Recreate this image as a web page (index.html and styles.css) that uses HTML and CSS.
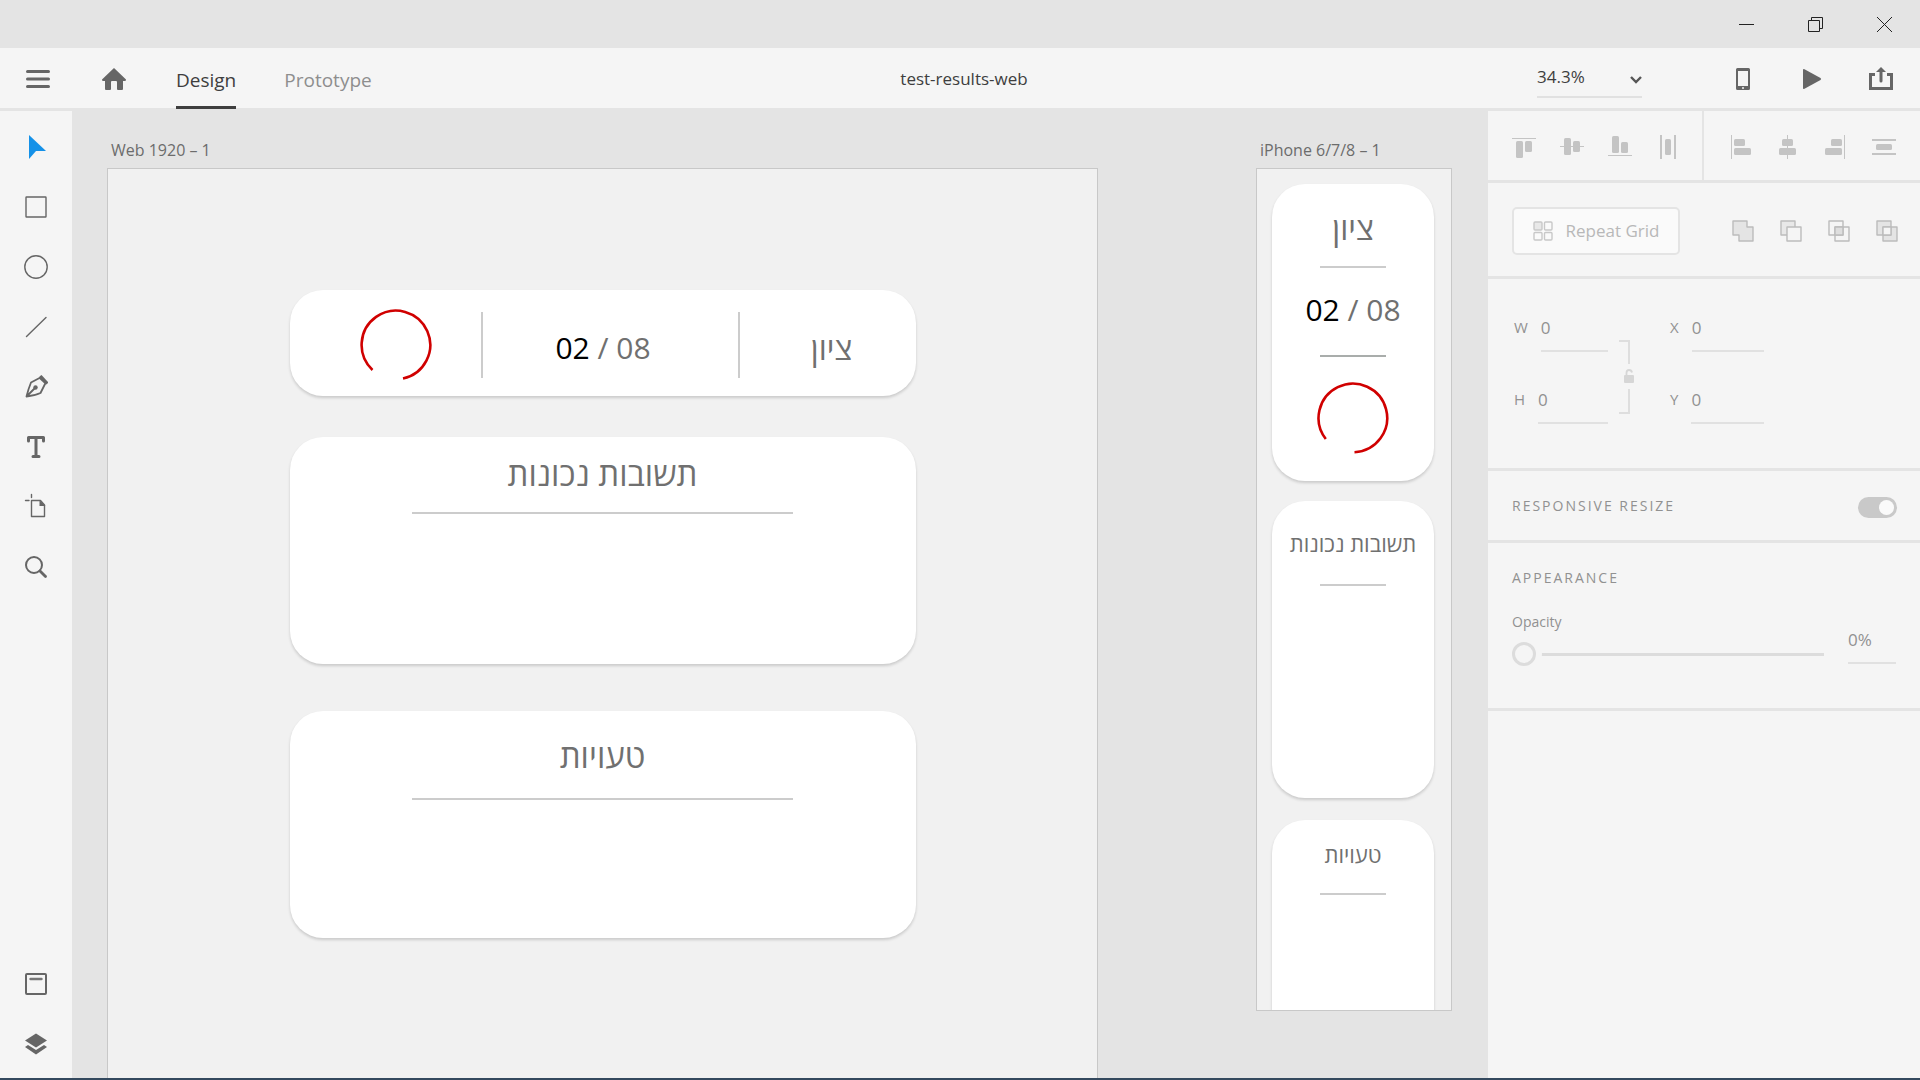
FILE: index.html
```html
<!DOCTYPE html>
<html lang="en">
<head>
<meta charset="utf-8">
<meta name="viewport" content="width=device-width, initial-scale=1">
<title>test-results-web</title>
<link rel="stylesheet" href="styles.css">
</head>
<body>
<div class="window-bar">
  <button class="window-btn" aria-label="Minimize"><svg width="15" height="15" viewBox="0 0 15 15"><path d="M0 7.5H15" class="thin"/></svg></button>
  <button class="window-btn" aria-label="Restore"><svg width="15" height="15" viewBox="0 0 15 15"><path d="M.5 3.5h11v11H.5zM3.500 3.500V.5h11v11h-3" class="thin"/></svg></button>
  <button class="window-btn" aria-label="Close"><svg width="15" height="15" viewBox="0 0 15 15"><path d="M0 0L15 15M15 0L0 15" class="thin"/></svg></button>
</div>

<header class="header">
  <div class="header-left">
    <button class="icon-btn" aria-label="Menu"><svg width="28" height="28" viewBox="0 0 28 28"><path d="M3.500 6.500h21M3.500 14h21M3.500 21.500h21" stroke="#666" stroke-width="3" stroke-linecap="round"/></svg></button>
    <button class="icon-btn" aria-label="Home"><svg width="28" height="28" viewBox="0 0 28 28"><path d="M14 3L26 14.500Q26.300 16 24.500 16H23V24q0 1-1 1h-4q-1 0-1-1v-7q0-1-1-1h-4q-1 0-1 1v7q0 1-1 1H6q-1 0-1-1v-8H3.500Q1.700 16 2 14.500Z" fill="#666"/></svg></button>
    <nav class="tabs">
      <a class="tab tab-active" href="#design">Design</a>
      <a class="tab" href="#prototype">Prototype</a>
    </nav>
  </div>
  <h1 class="doc-title">test-results-web</h1>
  <div class="header-right">
    <div class="zoom">
      <select class="zoom-select" aria-label="Zoom"><option>34.3%</option></select>
      <svg class="zoom-arrow" width="12" height="8" viewBox="0 0 12 8"><path d="M1 1l5 5 5-5" fill="none" stroke="#555" stroke-width="2.400"/></svg>
    </div>
    <div class="header-actions">
      <button class="icon-btn" aria-label="Device preview"><svg width="28" height="28" viewBox="0 0 28 28"><path fill-rule="evenodd" d="M8.500 3h11q1.500 0 1.500 1.500v19q0 1.500-1.500 1.500h-11Q7 25 7 23.500v-19Q7 3 8.500 3zM9 6v15h10V6zM13 22.300v1.400h2v-1.400z" fill="#666"/></svg></button>
      <button class="icon-btn" aria-label="Play"><svg width="28" height="28" viewBox="0 0 28 28"><path d="M5 5q0-1.500 1.500-.7L22.500 13q1.200 1 0 2L6.500 23.700Q5 24.500 5 23z" fill="#666"/></svg></button>
      <button class="icon-btn" aria-label="Share"><svg width="28" height="28" viewBox="0 0 28 28"><path d="M8 9.500H3.500v14h21v-14H20" fill="none" stroke="#666" stroke-width="3"/><path d="M14 16V6" stroke="#666" stroke-width="3" stroke-linecap="round"/><path d="M14 2l5 5H9z" fill="#666"/></svg></button>
    </div>
  </div>
</header>

<main class="workspace">
  <aside class="tools" aria-label="Tools">
    <div class="tool-group">
      <button class="tool" aria-label="Select"><svg width="24" height="24" viewBox="0 0 24 24"><path d="M5 0L22 16H12L5 24z" fill="#1491e8"/></svg></button>
      <button class="tool" aria-label="Rectangle"><svg width="24" height="24" viewBox="0 0 24 24"><rect x="2" y="2" width="20" height="20" rx=".5" class="line"/></svg></button>
      <button class="tool" aria-label="Ellipse"><svg width="24" height="24" viewBox="0 0 24 24"><circle cx="12" cy="12" r="11.200" class="line"/></svg></button>
      <button class="tool" aria-label="Line"><svg width="24" height="24" viewBox="0 0 24 24"><path d="M2.500 21.500L22 2.500" class="line"/></svg></button>
      <button class="tool" aria-label="Pen"><svg width="24" height="24" viewBox="0 0 24 24"><path d="M15.500 3L7 7.500Q4.500 13.500 2.500 21.500Q11 20.500 16.500 18L21 9M2.500 21.500L11 13" fill="none" stroke="#666" stroke-width="1.800" stroke-linecap="round" stroke-linejoin="round"/><circle cx="11.500" cy="12.500" r="2.200" fill="#666"/><path d="M17.500 0q-3 1.500-2.300 3.800l6 5.500q2 .8 3-2z" fill="#666"/></svg></button>
      <button class="tool" aria-label="Text"><svg width="24" height="24" viewBox="0 0 24 24"><path d="M4.500 6V2.500H19.500V6M12 3V21.500M9 21.500h6" fill="none" stroke="#666" stroke-width="3" stroke-linecap="round" stroke-linejoin="round"/></svg></button>
      <button class="tool" aria-label="Artboard"><svg width="28" height="28" viewBox="0 0 28 28"><path d="M9.500 7.500H18.500L22.500 12V23.500H9.500z" class="line"/><path d="M17.500 7l6 6h-6z" fill="#666"/><path d="M3.500 7.500H7M9.500 1.500v3" class="line"/></svg></button>
      <button class="tool" aria-label="Zoom tool"><svg width="24" height="24" viewBox="0 0 24 24"><circle cx="10" cy="10" r="8" fill="none" stroke="#666" stroke-width="2"/><path d="M16 16l5.500 5.500" stroke="#666" stroke-width="2.800" stroke-linecap="round"/></svg></button>
    </div>
    <div class="tool-group">
      <button class="tool" aria-label="Assets"><svg width="24" height="24" viewBox="0 0 24 24"><rect x="2" y="2" width="20" height="20" rx="1" fill="none" stroke="#666" stroke-width="2"/><path d="M6.500 7h11" stroke="#777" stroke-width="2.400" stroke-linecap="round"/></svg></button>
      <button class="tool" aria-label="Layers"><svg width="24" height="24" viewBox="0 0 24 24"><path d="M12 1.500L23 8.500L12 15.500L1 8.500z" fill="#666"/><path d="M1 15l3-2 8 5 8-5 3 2-11 7.500z" fill="#666"/></svg></button>
    </div>
  </aside>

  <section class="canvas">
    <div class="artboard artboard-web">
      <div class="artboard-name">Web 1920 – 1</div>
      <div class="board board-web">
        <div class="card score-card">
          <div class="score-ring"><svg width="72" height="72" viewBox="0 0 72 72"><path d="M12.500 61A34.300 34.300 0 1 1 43 69.500" class="ring"/></svg></div>
          <div class="score-value">02<span class="muted"> / 08</span></div>
          <div class="score-label" lang="he" dir="rtl">ציון</div>
        </div>
        <div class="card answers-card">
          <h2 class="card-title" lang="he" dir="rtl">תשובות נכונות</h2>
          <hr class="rule">
        </div>
        <div class="card mistakes-card">
          <h2 class="card-title" lang="he" dir="rtl">טעויות</h2>
          <hr class="rule">
        </div>
      </div>
    </div>

    <div class="artboard artboard-phone">
      <div class="artboard-name">iPhone 6/7/8 – 1</div>
      <div class="board board-phone">
        <div class="card phone-score">
          <div class="score-label" lang="he" dir="rtl">ציון</div>
          <hr class="rule">
          <div class="score-value">02<span class="muted"> / 08</span></div>
          <hr class="rule rule-dark">
          <svg width="72" height="72" viewBox="0 0 72 72"><path d="M8.800 57A34.300 34.300 0 1 1 37.500 70.200" class="ring"/></svg>
        </div>
        <div class="card phone-answers">
          <h2 class="card-title" lang="he" dir="rtl">תשובות נכונות</h2>
          <hr class="rule">
        </div>
        <div class="card phone-mistakes">
          <h2 class="card-title" lang="he" dir="rtl">טעויות</h2>
          <hr class="rule">
        </div>
      </div>
    </div>
  </section>

  <aside class="inspector" aria-label="Properties">
    <div class="align-row">
      <div class="align-group">
        <button class="small-btn" aria-label="Align top"><svg width="24" height="24" viewBox="0 0 24 24" fill="#c4c4c4"><rect y="3" width="24" height="1"/><rect x="4" y="6" width="7" height="17" rx="1.500"/><rect x="13" y="6" width="7" height="11" rx="1.500"/></svg></button>
        <button class="small-btn" aria-label="Align middle"><svg width="24" height="24" viewBox="0 0 24 24" fill="#c4c4c4"><rect y="11" width="24" height="1"/><rect x="4" y="3" width="7" height="17" rx="1.500"/><rect x="13" y="6" width="7" height="11" rx="1.500"/></svg></button>
        <button class="small-btn" aria-label="Align bottom"><svg width="24" height="24" viewBox="0 0 24 24" fill="#c4c4c4"><rect y="20" width="24" height="1"/><rect x="4" y="1" width="7" height="17" rx="1.500"/><rect x="13" y="7" width="7" height="11" rx="1.500"/></svg></button>
        <button class="small-btn" aria-label="Distribute horizontally"><svg width="24" height="24" viewBox="0 0 24 24" fill="#c4c4c4"><rect x="4" width="2" height="24"/><rect x="18" width="2" height="24"/><rect x="9" y="4" width="6" height="16" rx="1.500"/></svg></button>
      </div>
      <div class="align-group">
        <button class="small-btn" aria-label="Align left"><svg width="24" height="24" viewBox="0 0 24 24" fill="#c4c4c4"><rect x="3" width="1" height="24"/><rect x="6" y="4" width="11" height="7" rx="1.500"/><rect x="6" y="13" width="17" height="7" rx="1.500"/></svg></button>
        <button class="small-btn" aria-label="Align center"><svg width="24" height="24" viewBox="0 0 24 24" fill="#c4c4c4"><rect x="11" width="1" height="24"/><rect x="6" y="4" width="11" height="7" rx="1.500"/><rect x="3" y="13" width="17" height="7" rx="1.500"/></svg></button>
        <button class="small-btn" aria-label="Align right"><svg width="24" height="24" viewBox="0 0 24 24" fill="#c4c4c4"><rect x="20" width="1" height="24"/><rect x="7" y="4" width="11" height="7" rx="1.500"/><rect x="1" y="13" width="17" height="7" rx="1.500"/></svg></button>
        <button class="small-btn" aria-label="Distribute vertically"><svg width="24" height="24" viewBox="0 0 24 24" fill="#c4c4c4"><rect y="4" width="24" height="2"/><rect y="18" width="24" height="2"/><rect x="4" y="9" width="16" height="6" rx="1.500"/></svg></button>
      </div>
    </div>

    <div class="panel repeat-row">
      <button class="repeat-btn"><svg width="20" height="20" viewBox="0 0 20 20" stroke="#c8c8c8" stroke-width="1.400"><rect x="1" y="1" width="8" height="8" rx="1" fill="#e8e8e8"/><rect x="11.500" y="1" width="7.500" height="8" rx="1" fill="none"/><rect x="1" y="11.500" width="8" height="7.500" rx="1" fill="none"/><rect x="11.500" y="11.500" width="7.500" height="7.500" rx="1" fill="none"/></svg>Repeat Grid</button>
      <div class="bool-group">
        <button class="small-btn" aria-label="Add"><svg width="24" height="24" viewBox="0 0 24 24"><path d="M2 2h14v6h6v14H8v-6H2z" fill="#e4e4e4" class="bool"/></svg></button>
        <button class="small-btn" aria-label="Subtract"><svg width="24" height="24" viewBox="0 0 24 24"><path d="M2 2h14v14H2z" fill="#e8e8e8" class="bool"/><path d="M8 8h14v14H8z" fill="#f5f5f5" class="bool"/></svg></button>
        <button class="small-btn" aria-label="Intersect"><svg width="24" height="24" viewBox="0 0 24 24"><path d="M2 2h14v14H2zM8 8h14v14H8z" fill="none" class="bool"/><path d="M8 8h8v8H8z" fill="#dedede" class="bool"/></svg></button>
        <button class="small-btn" aria-label="Exclude overlap"><svg width="24" height="24" viewBox="0 0 24 24"><path d="M2 2h14v14H2zM8 8h14v14H8z" fill="#e4e4e4" class="bool"/><path d="M8 8h8v8H8z" fill="#f5f5f5" class="bool"/></svg></button>
      </div>
    </div>

    <div class="panel transform-row">
      <div class="field-col field-size">
        <div class="field"><label for="w">W</label><input id="w" value="0"></div>
        <div class="field"><label for="h">H</label><input id="h" value="0"></div>
      </div>
      <svg class="lock" width="16" height="74" viewBox="0 0 16 74"><path d="M0 1h10v23M0 73h10V49" fill="none" stroke="#dedede" stroke-width="2"/><rect x="5" y="35" width="10" height="8" rx="1" fill="#d6d6d6"/><path d="M7.500 35v-2q0-3 2.500-3t3 2.500" fill="none" stroke="#d6d6d6" stroke-width="1.800"/></svg>
      <div class="field-col field-pos">
        <div class="field"><label for="x">X</label><input id="x" value="0"></div>
        <div class="field"><label for="y">Y</label><input id="y" value="0"></div>
      </div>
    </div>

    <div class="panel resize-row">
      <label class="section-title" for="resize">RESPONSIVE RESIZE</label>
      <input class="toggle" id="resize" type="checkbox" checked>
    </div>

    <div class="panel appearance">
      <h2 class="section-title">APPEARANCE</h2>
      <div class="opacity-row">
        <div class="opacity-main">
          <label class="opacity-label" for="opacity">Opacity</label>
          <input class="slider" id="opacity" type="range" min="0" max="100" value="0">
        </div>
        <input class="opacity-value" aria-label="Opacity value" value="0%">
      </div>
    </div>
  </aside>
</main>
<div class="bottom-edge"></div>
</body>
</html>
```
FILE: styles.css
```css
* { box-sizing: border-box; }

body {
  margin: 0;
  height: 100vh;
  display: flex;
  flex-direction: column;
  overflow: hidden;
  background: #e4e4e4;
  color: #3e3e3e;
  font: 16px/24px "Open Sans", "Noto Sans", sans-serif;
}

button, input, select {
  margin: 0;
  padding: 0;
  border: 0;
  border-radius: 0;
  background: none;
  color: inherit;
  font: inherit;
}

button {
  display: flex;
  align-items: center;
  justify-content: center;
}

h1, h2 { margin: 0; font-weight: 400; }
svg { display: block; flex: none; }

.thin { fill: none; stroke: #222; stroke-width: 1; }
.line { fill: none; stroke: #666; stroke-width: 1.4; stroke-linecap: round; stroke-linejoin: round; }
.bool { stroke: #bcbcbc; stroke-width: 1.4; stroke-linejoin: round; }
.ring { fill: none; stroke: #d00000; stroke-width: 2.6; }

/* Window bar */
.window-bar { display: flex; justify-content: flex-end; height: 48px; padding-right: 1px; flex: none; }
.window-btn { width: 69px; }

/* Header */
.header {
  display: grid;
  grid-template-columns: 1fr auto 1fr;
  flex: none;
  height: 60px;
  padding: 0 16px 0 24px;
  background: #f5f5f5;
}
.header-left, .header-right { display: flex; align-items: center; }
.header-left { gap: 48px; }
.header-right { justify-content: flex-end; gap: 87px; padding-right: 9px; }
.header-actions { display: flex; gap: 41px; }
.tabs { display: flex; gap: 48px; }
.tab {
  height: 60px;
  padding-top: 3px;
  border-bottom: 3px solid transparent;
  color: #8e8e8e;
  font-size: 19px;
  line-height: 56px;
  text-decoration: none;
}
.tab-active { color: #3e3e3e; border-color: #3e3e3e; }
.doc-title { font-size: 17px; line-height: 62px; }
.zoom { position: relative; width: 105px; }
.zoom-select {
  display: block;
  width: 100%;
  height: 37px;
  padding-bottom: 3px;
  border-bottom: 2px solid #e1e1e1;
  font-size: 17px;
  appearance: none;
}
.zoom-arrow { position: absolute; right: 0; top: 15px; pointer-events: none; }

/* Workspace */
.workspace { flex: 1; display: flex; min-height: 0; }
.tools {
  display: flex;
  flex-direction: column;
  justify-content: space-between;
  width: 72px;
  margin-top: 3px;
  padding: 6px 0 4px;
  background: #f5f5f5;
}
.tool { width: 72px; height: 60px; }

/* Canvas and artboards */
.canvas {
  flex: 1;
  display: flex;
  justify-content: space-between;
  align-items: flex-start;
  min-width: 0;
  padding: 27px 36px 0 35px;
  overflow: hidden;
}
.artboard-web { width: 991px; }
.artboard-phone { width: 196px; }
.artboard-name { padding: 0 0 3px 4px; color: #6c6c6c; line-height: 30px; white-space: nowrap; }
.board { border: 1px solid #c8c8c8; background: #f1f1f1; overflow: hidden; }
.board-web { display: flex; flex-direction: column; align-items: center; height: 1080px; padding-top: 121px; }
.board-phone { height: 843px; padding: 15px 17px 0 15px; }

.card {
  border-radius: 33px;
  background: #fff;
  box-shadow: 0 2px 3px rgba(0, 0, 0, .16);
  color: #707070;
  text-align: center;
}
.rule { width: 66px; height: 2px; margin: 0 auto; border: 0; background: #ccc; }
.rule-dark { background: #a9adab; }
.card-title { line-height: 40px; }
.score-value { color: #000; font-size: 30px; line-height: 40px; white-space: pre; }
.score-label { font-size: 32px; line-height: 40px; }
.muted { color: #707070; }

.board-web .card { width: 626px; height: 227px; }
.board-web .score-card {
  display: grid;
  grid-template-columns: 193px 257px 1fr;
  align-items: center;
  height: 106px;
  padding: 22px 0 18px;
}
.score-card > div { display: flex; align-items: center; justify-content: center; height: 66px; }
.score-card .score-ring { padding-left: 22px; border-right: 2px solid #ccc; }
.score-card .score-value { padding: 5px 14px 0 0; border-right: 2px solid #ccc; }
.score-card .score-label { padding: 5px 0 0 8px; }
.board-web .card-title { font-size: 33px; }
.board-web .rule { width: 381px; }
.answers-card { margin-top: 41px; padding-top: 17px; }
.answers-card .rule { margin-top: 18px; }
.mistakes-card { margin-top: 47px; padding-top: 25px; }
.mistakes-card .rule { margin-top: 22px; }

.board-phone .card-title { font-size: 22px; }
.phone-score { display: flex; flex-direction: column; height: 297px; padding-top: 24px; }
.phone-score .rule { margin-top: 18px; }
.phone-score .score-value { margin-top: 22px; text-align: center; }
.phone-score .rule-dark { margin-top: 25px; }
.phone-score svg { margin: 25px auto 0; }
.phone-answers { height: 297px; margin-top: 20px; padding-top: 22px; }
.phone-answers .rule { margin-top: 21px; }
.phone-mistakes { height: 297px; margin-top: 22px; padding-top: 14px; }
.phone-mistakes .rule { margin-top: 19px; }

/* Inspector */
.inspector {
  display: flex;
  flex-direction: column;
  width: 432px;
  margin-top: 3px;
  background: #f5f5f5;
  color: #919191;
}
.panel, .align-row { border-bottom: 3px solid #e4e4e4; padding: 0 24px; }
.align-row { display: flex; justify-content: space-between; height: 72px; }
.align-group { display: flex; align-items: center; gap: 24px; padding-top: 2px; }
.align-group + .align-group { padding-left: 24px; border-left: 2px solid #e4e4e4; }
.repeat-row { display: flex; align-items: center; justify-content: space-between; height: 96px; padding: 2px 21px 0 24px; }
.repeat-btn {
  gap: 13px;
  width: 168px;
  height: 48px;
  border: 2px solid #e4e4e4;
  border-radius: 5px;
  background: #fafafa;
  color: #b8b8b8;
  font-size: 17px;
}
.bool-group { display: flex; gap: 24px; }

.transform-row { display: flex; height: 192px; padding-top: 24px; }
.field-col { display: flex; flex-direction: column; gap: 23px; }
.field-size { width: 96px; }
.field-pos { width: 96px; margin-left: 33px; }
.field { display: flex; height: 49px; line-height: 49px; }
.field label { padding-left: 2px; font-size: 15px; }
.field input { flex: 1; min-width: 0; margin-left: 13px; padding-top: 2px; border-bottom: 2px solid #e1e1e1; font-size: 17px; }
.lock { margin: 37px 0 0 11px; }

.resize-row { display: flex; align-items: center; justify-content: space-between; height: 72px; padding-right: 23px; }
.section-title { font-size: 14px; line-height: 24px; letter-spacing: 2px; }
.toggle {
  display: flex;
  align-items: center;
  justify-content: flex-end;
  width: 39px;
  height: 21px;
  margin-top: 3px;
  padding-right: 3px;
  border-radius: 11px;
  background: #c9c9c9;
  appearance: none;
}
.toggle::after { content: ""; width: 15px; height: 15px; border-radius: 50%; background: #fafafa; }

.appearance { height: 168px; padding-top: 23px; }
.opacity-row { display: flex; gap: 24px; margin-top: 20px; }
.opacity-main { flex: 1; }
.opacity-label { display: block; font-size: 14px; line-height: 24px; }
.slider { display: block; width: 100%; height: 24px; margin-top: 8px; appearance: none; overflow: visible; }
.slider::-webkit-slider-runnable-track { height: 3px; background: #dcdcdc; }
.slider::-webkit-slider-thumb {
  width: 24px;
  height: 24px;
  margin-top: -11px;
  border: 3px solid #dcdcdc;
  border-radius: 50%;
  background: #f5f5f5;
  box-shadow: 0 0 0 6px #f5f5f5;
  appearance: none;
}
.opacity-value { width: 48px; height: 38px; margin-top: 16px; padding-bottom: 9px; border-bottom: 2px solid #e1e1e1; font-size: 17px; }

.bottom-edge { flex: none; height: 2px; background: #34495e; }
```
